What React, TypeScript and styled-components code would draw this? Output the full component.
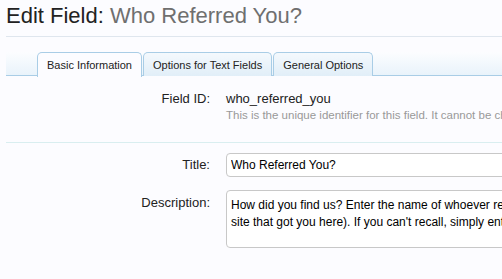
import React from 'react'
import styled, { createGlobalStyle } from 'styled-components'

const GlobalStyle = createGlobalStyle`
    body {
        margin: 0;
        background: #fcfcff;
        font-family: "Liberation Sans", Arial, sans-serif;
        overflow: hidden;
    }
`

const Page = styled.div`
    padding: 0 0 0 6px;
    width: 496px;
    overflow: hidden;
`

const Heading = styled.h1`
    margin: 0;
    padding: 3px 0 7px;
    font-size: 22px;
    font-weight: normal;
    line-height: 26px;
    color: #222;
    border-bottom: 1px solid #dfe6ee;
`

const HeadingSub = styled.span`
    color: #6f6f6f;
`

const TabStrip = styled.ul`
    display: flex;
    list-style: none;
    margin: 15px 0 0;
    padding: 0 0 0 31px;
    height: 23px;
    background: linear-gradient(to bottom, #fcfdff 0%, #e9f3fb 100%);
    border-bottom: 1px solid #a9cde6;
`

const Tab = styled.li<{ $active?: boolean }>`
    display: flex;
    align-items: center;
    padding: 0 9px;
    margin-right: 1px;
    font-size: 11px;
    color: #222;
    border: 1px solid #a9cde6;
    border-bottom: none;
    border-radius: 5px 5px 0 0;
    background: ${p => p.$active ? '#fcfcff' : 'linear-gradient(to bottom, #f4f9fd 0%, #e1eef8 100%)'};
    height: ${p => p.$active ? '24px' : '23px'};
    position: relative;
    z-index: ${p => p.$active ? 1 : 0};
`

const Form = styled.div`
    padding-top: 11px;
`

const Row = styled.div<{ $gap?: number }>`
    display: grid;
    grid-template-columns: 204px 1fr;
    column-gap: 16px;
    align-items: start;
    padding-bottom: ${p => p.$gap ?? 12}px;
`

const Separator = styled.div`
    border-top: 1px solid #d9eef0;
    margin: 20px 0 10px;
`

const Label = styled.div<{ $top?: number }>`
    text-align: right;
    font-size: 13px;
    line-height: 15px;
    color: #222;
    padding-top: ${p => p.$top ?? 4}px;
`

const Value = styled.div`
    font-size: 13px;
    line-height: 15px;
    color: #222;
    padding-top: 4px;
`

const Hint = styled.div`
    font-size: 11.5px;
    line-height: 13px;
    color: #999;
    margin-top: 3px;
    white-space: nowrap;
`

const TextInput = styled.input`
    box-sizing: border-box;
    width: 300px;
    height: 24px;
    padding: 0 4px;
    font-family: "Liberation Sans", Arial, sans-serif;
    font-size: 12px;
    color: #000;
    background: #fff;
    border: 1px solid #c8c8c8;
    border-radius: 4px;
    outline: none;
`

const TextArea = styled.textarea`
    box-sizing: border-box;
    width: 300px;
    height: 58px;
    padding: 6px 4px 0;
    font-family: "Liberation Sans", Arial, sans-serif;
    font-size: 12px;
    line-height: 17px;
    color: #000;
    background: #fff;
    border: 1px solid #c8c8c8;
    border-radius: 4px;
    resize: none;
    outline: none;
    overflow: hidden;
    white-space: pre;
`

export default function App() {
    return (
        <Page>
            <GlobalStyle />
            <Heading>
                Edit Field: <HeadingSub>Who Referred You?</HeadingSub>
            </Heading>
            <TabStrip>
                <Tab $active>Basic Information</Tab>
                <Tab>Options for Text Fields</Tab>
                <Tab>General Options</Tab>
            </TabStrip>
            <Form>
                <Row $gap={0}>
                    <Label>Field ID:</Label>
                    <Value>
                        who_referred_you
                        <Hint>This is the unique identifier for this field. It cannot be changed once set.</Hint>
                    </Value>
                </Row>
                <Separator />
                <Row $gap={13}>
                    <Label>Title:</Label>
                    <div><TextInput defaultValue="Who Referred You?" /></div>
                </Row>
                <Row>
                    <Label $top={5}>Description:</Label>
                    <div>
                        <TextArea
                            readOnly
                            defaultValue={"How did you find us? Enter the name of whoever referred you (or the\nsite that got you here). If you can't recall, simply enter 'none'."}
                        />
                    </div>
                </Row>
            </Form>
        </Page>
    )
}
